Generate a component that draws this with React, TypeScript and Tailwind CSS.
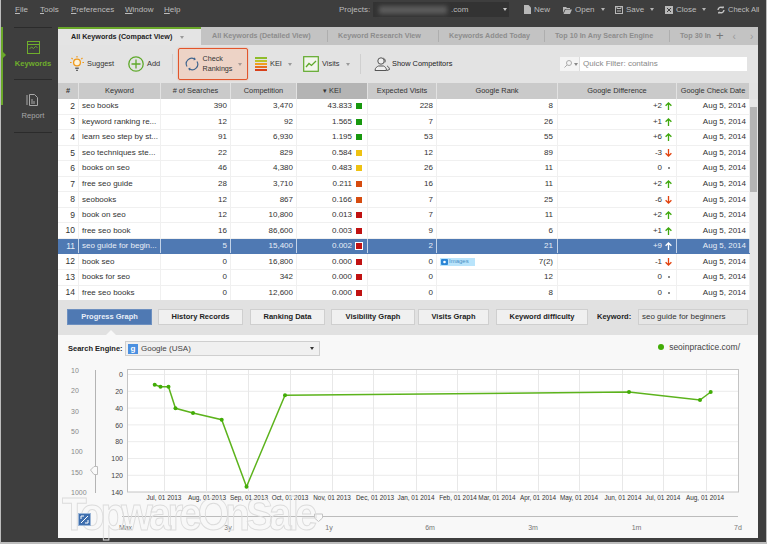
import React from 'react';

const GRID = 'grid grid-cols-[21px_82px_70px_66px_71px_69px_121px_119px_73px]';
const KEI = { g: 'bg-[#18980f]', y: 'bg-[#eec212]', o: 'bg-[#d64c10]', r: 'bg-[#c01212]' };

type Row = { n: number; kw: string; s: string; c: string; kei: string; k: keyof typeof KEI; v: string; rank: string; d: string; dir: 'up' | 'down' | 'none' };

const ROWS: Row[] = [
  { n: 2, kw: 'seo books', s: '390', c: '3,470', kei: '43.833', k: 'g', v: '228', rank: '8', d: '+2', dir: 'up' },
  { n: 3, kw: 'keyword ranking re...', s: '12', c: '92', kei: '1.565', k: 'g', v: '7', rank: '26', d: '+1', dir: 'up' },
  { n: 4, kw: 'learn seo step by st...', s: '91', c: '6,930', kei: '1.195', k: 'g', v: '53', rank: '55', d: '+6', dir: 'up' },
  { n: 5, kw: 'seo techniques ste...', s: '22', c: '829', kei: '0.584', k: 'y', v: '12', rank: '89', d: '-3', dir: 'down' },
  { n: 6, kw: 'books on seo', s: '46', c: '4,380', kei: '0.483', k: 'y', v: '26', rank: '11', d: '0', dir: 'none' },
  { n: 7, kw: 'free seo guide', s: '28', c: '3,710', kei: '0.211', k: 'o', v: '16', rank: '11', d: '+2', dir: 'up' },
  { n: 8, kw: 'seobooks', s: '12', c: '867', kei: '0.166', k: 'o', v: '7', rank: '25', d: '-6', dir: 'down' },
  { n: 9, kw: 'book on seo', s: '12', c: '10,800', kei: '0.013', k: 'r', v: '7', rank: '11', d: '+2', dir: 'up' },
  { n: 10, kw: 'free seo book', s: '16', c: '86,600', kei: '0.003', k: 'r', v: '9', rank: '6', d: '+1', dir: 'up' },
  { n: 11, kw: 'seo guide for begin...', s: '5', c: '15,400', kei: '0.002', k: 'r', v: '2', rank: '21', d: '+9', dir: 'up' },
  { n: 12, kw: 'book seo', s: '0', c: '16,800', kei: '0.000', k: 'r', v: '0', rank: '7(2)', d: '-1', dir: 'down' },
  { n: 13, kw: 'books for seo', s: '0', c: '342', kei: '0.000', k: 'r', v: '0', rank: '12', d: '0', dir: 'none' },
  { n: 14, kw: 'free seo books', s: '0', c: '12,600', kei: '0.000', k: 'r', v: '0', rank: '8', d: '0', dir: 'none' },
];

const POINTS: [number, number][] = [
  [154.7, 384.7], [160.5, 386.7], [168.5, 386.7], [175.5, 408.3], [193, 413], [221.7, 419.7],
  [246.5, 486.7], [285, 395.3], [629, 392], [700, 400], [710.7, 392],
];
const V_LINES = [164, 206, 248, 290, 332, 373, 416, 457, 496, 538, 579, 622, 663, 706];
const X_LABELS: [number, string][] = [
  [164, 'Jul, 01 2013'], [207, 'Aug, 01 2013'], [249, 'Sep, 01 2013'], [290, 'Oct, 01 2013'],
  [332, 'Nov, 01 2013'], [375, 'Dec, 01 2013'], [416, 'Jan, 01 2014'], [458, 'Feb, 01 2014'],
  [497, 'Mar, 01 2014'], [538, 'Apr, 01 2014'], [579, 'May, 01 2014'], [623, 'Jun, 01 2014'],
  [663, 'Jul, 01 2014'], [705, 'Aug, 01 2014'],
];

function Caret({ className = 'border-t-[#9a9a9a]' }: { className?: string }) {
  return <span className={`inline-block w-0 h-0 border-x-[2.5px] border-x-transparent border-t-[3px] ${className}`} />;
}

function MenuItem({ first, rest, className }: { first: string; rest: string; className: string }) {
  return <span className={`shrink-0 ${className}`}><span className="underline">{first}</span>{rest}</span>;
}

function TopAction({ icon, label, caret, className }: { icon: React.ReactNode; label: string; caret?: boolean; className: string }) {
  return (
    <div className={`flex items-center shrink-0 whitespace-nowrap ${className}`}>
      {icon}
      <span className="ml-[3px]">{label}</span>
      {caret && <span className="ml-[6px] flex"><Caret className="border-t-[#b5b5b5]" /></span>}
    </div>
  );
}

function DiffArrow({ dir, white }: { dir: Row['dir']; white: boolean }) {
  if (dir === 'none') return <span className="w-[7px] flex justify-center"><span className="w-[2px] h-[2px] rounded-full bg-[#666]" /></span>;
  const color = white ? '#ffffff' : dir === 'up' ? '#3fa80f' : '#e2430f';
  return (
    <svg width="7" height="8" viewBox="0 0 7 8" fill="none" stroke={color} strokeWidth="1.3">
      {dir === 'up' ? <path d="M3.5 8V1M.6 3.8 3.5 1l2.9 2.8" /> : <path d="M3.5 0v7M.6 4.2 3.5 7l2.9-2.8" />}
    </svg>
  );
}

function TabButton({ label, className, active }: { label: string; className: string; active?: boolean }) {
  return (
    <div className={`h-4 flex items-center justify-center border font-bold shrink-0 whitespace-nowrap text-[7.5px] ${active ? 'bg-[#4f79b3] border-[#6d90c0] text-[#e8eef7]' : 'bg-[#f0f0f0] border-[#cfcfcf] text-[#222]'} ${className}`}>
      {label}
    </div>
  );
}

function Chart() {
  return (
    <svg width="700" height="178" viewBox="58 360 700 178" className="block">
      <g fontSize="7" fill="#888">
        {([[370, '10'], [390, '20'], [411, '30'], [431, '50'], [451, '100'], [472, '150'], [492, '1000']] as [number, string][]).map(([y, t]) => (
          <text key={t} x="71" y={y + 2.5}>{t}</text>
        ))}
      </g>
      <line x1="95.5" y1="370" x2="95.5" y2="493" stroke="#b4b4b4" />
      <path d="M90.5 470 94 466.5h3.5v8H94z" fill="#fafafa" stroke="#bdbdbd" />

      <rect x="127.5" y="369.5" width="611" height="122.5" fill="#fff" stroke="#c4c4c4" />
      {[0, 1, 2, 3, 4, 5, 6].map((i) => (
        <line key={i} x1="128" x2="738" y1={374.5 + i * 16.8} y2={374.5 + i * 16.8} stroke="#ececec" />
      ))}
      {V_LINES.map((x) => <line key={x} x1={x + 0.5} x2={x + 0.5} y1="370" y2="492" stroke="#e8e8e8" />)}
      <g fontSize="7" fill="#444" textAnchor="end">
        {[0, 20, 40, 60, 80, 100, 120, 140].map((v, i) => (
          <text key={v} x="123" y={377 + i * 16.85}>{v}</text>
        ))}
      </g>
      <polyline points={POINTS.map((p) => p.join(',')).join(' ')} fill="none" stroke="#5cb31c" strokeWidth="1.5" />
      {POINTS.map(([x, y]) => <circle key={x} cx={x} cy={y} r="2" fill="#41ac06" />)}
      <g fontSize="6.4" fill="#333" textAnchor="middle">
        {X_LABELS.map(([x, t]) => <text key={x} x={x} y="499.5">{t}</text>)}
      </g>

      <line x1="122" y1="516.5" x2="738" y2="516.5" stroke="#bcbcbc" />
      <path d="M314.5 514h8v4l-4 3.5-4-3.5z" fill="#fafafa" stroke="#c4c4c4" />
      <g fontSize="7" fill="#777" textAnchor="middle">
        {([[125.5, 'Max'], [228, '3y'], [329, '1y'], [430, '6m'], [533, '3m'], [636.5, '1m'], [738, '7d']] as [number, string][]).map(([x, t]) => (
          <text key={t} x={x} y="530">{t}</text>
        ))}
      </g>
    </svg>
  );
}

export default function App() {
  return (
    <div className="relative w-[767px] h-[544px] bg-[#bdbdbd] overflow-hidden font-['Liberation_Sans',Arial,sans-serif] text-[8px] text-[#333]">
      <div className="w-[765px] h-[542px] ml-[1px] bg-[#3e3e3e] flex flex-col">
        {/* menu bar */}
        <div className="h-[27px] shrink-0 flex text-[#bcbcbc] pt-[4px]">
          <div className="h-[11px] flex items-center w-full pl-[14px]">
            <MenuItem first="F" rest="ile" className="w-[25px]" />
            <MenuItem first="T" rest="ools" className="w-[31px]" />
            <MenuItem first="P" rest="references" className="w-[54px]" />
            <MenuItem first="W" rest="indow" className="w-[39px]" />
            <MenuItem first="H" rest="elp" className="w-[175px]" />
            <span className="w-[34px] shrink-0">Projects:</span>
            <div className="w-[136px] h-[15px] bg-[#333] flex items-center shrink-0">
              <div className="ml-[6px] w-[68px] h-[8px] bg-[#5c5c5c] blur-[2px]" />
              <span className="ml-[4px]">.com</span>
              <span className="ml-[35px] flex"><Caret className="border-t-[#c8c8c8]" /></span>
            </div>
            <TopAction label="New" className="ml-[15px] w-[39px]" icon={
              <svg width="7" height="9" viewBox="0 0 7 9"><path d="M0 0h4.5L7 2.5V9H0z" fill="#b8b8b8" /></svg>
            } />
            <TopAction label="Open" caret className="w-[52px]" icon={
              <svg width="9" height="8" viewBox="0 0 9 8"><path d="M0 1h3l1 1h3v1H2L0 7zM2.5 3.5H9L7 8H.5z" fill="#b8b8b8" /></svg>
            } />
            <TopAction label="Save" caret className="w-[50px]" icon={
              <svg width="8" height="8" viewBox="0 0 8 8" fill="none" stroke="#b8b8b8"><rect x=".5" y=".5" width="7" height="7" /><path d="M2 .5v2h4v-2M2 5h4" /></svg>
            } />
            <TopAction label="Close" caret className="w-[52px]" icon={
              <svg width="8" height="8" viewBox="0 0 8 8"><rect width="8" height="8" fill="#b8b8b8" /><path d="m2 2 4 4M6 2 2 6" stroke="#3e3e3e" /></svg>
            } />
            <TopAction label="Check All" className="text-[7.5px]" icon={
              <svg width="8" height="8" viewBox="0 0 8 8" fill="none" stroke="#c4c4c4" strokeWidth="1.4"><path d="M1 4a3 3 0 0 1 5-2M7 4a3 3 0 0 1-5 2" /><path d="M5 .5h2v2zM3 7.500H1v-2z" fill="#c4c4c4" stroke="none" /></svg>
            } />
          </div>
        </div>

        <div className="flex-1 flex min-h-0">
          {/* sidebar */}
          <div className="w-[57px] shrink-0 relative pl-[13px] pr-[6px] flex flex-col text-[7.6px]">
            <div className="absolute left-0 top-0 w-[2px] h-[78px] bg-[#6aa82a]" />
            <div className="absolute left-[2px] top-[25px] w-0 h-0 border-y-[3px] border-y-transparent border-l-[3px] border-l-[#6aa82a]" />
            <div className="h-[53px] border-y border-[#2b2b2b] flex flex-col items-center pt-[13px] text-[#6fae2c] font-bold">
              <svg width="13" height="13" viewBox="0 0 13 13" fill="none" stroke="#6fae2c">
                <rect x=".5" y=".5" width="12" height="12" />
                <path d="M.5 3.500h12" />
                <path d="m2.500 8 2-2 2 1.500 2-2 2 1" strokeWidth=".9" />
              </svg>
              <span className="mt-[4px]">Keywords</span>
            </div>
            <div className="h-[53px] border-b border-[#2b2b2b] flex flex-col items-center pt-[13px] text-[#a8a8a8]">
              <svg width="14" height="13" viewBox="0 0 14 13" fill="none" stroke="#a8a8a8">
                <path d="M3.500 1.500v11h8v-8l-3-3zM1 2v10" />
                <path d="M5.500 6h1v5h-1zM7.500 8h1v3h-1z" fill="#a8a8a8" stroke="none" />
              </svg>
              <span className="mt-[4px]">Report</span>
            </div>
          </div>

          {/* main panel */}
          <div className="w-[700px] shrink-0 h-[511px] flex flex-col bg-[#e2e2e2]">
            {/* tabs */}
            <div className="h-[18px] shrink-0 flex bg-[#c3c3c3] font-bold text-[#8d8d8d] items-stretch text-[7.2px] whitespace-nowrap">
              <div className="w-[143px] border-t-2 border-[#6aa82a] bg-[#e4e4e4] text-[#222] flex items-center pl-[13px] shrink-0">
                All Keywords (Compact View)
                <span className="ml-[8px] flex"><Caret /></span>
              </div>
              <div className="w-[127px] shrink-0 flex items-center pl-[11px] border-r border-[#aeaeae] my-[3px]">All Keywords (Detailed View)</div>
              <div className="w-[111px] shrink-0 flex items-center pl-[10px] border-r border-[#aeaeae] my-[3px]">Keyword Research View</div>
              <div className="w-[106px] shrink-0 flex items-center pl-[10px] border-r border-[#aeaeae] my-[3px]">Keywords Added Today</div>
              <div className="w-[125px] shrink-0 flex items-center pl-[10px] border-r border-[#aeaeae] my-[3px]">Top 10 In Any Search Engine</div>
              <div className="w-[42px] shrink-0 overflow-hidden flex items-center pl-[10px]">Top 30 In</div>
              <span className="ml-[4px] flex items-center text-[13px] font-normal text-[#777]">+</span>
              <span className="ml-[9px] flex items-center text-[10px] font-normal text-[#999]">‹</span>
              <span className="ml-[14px] flex items-center text-[10px] font-normal text-[#999]">›</span>
            </div>

            {/* toolbar */}
            <div className="h-[38px] shrink-0 flex items-center text-[#333] bg-[#e3e3e3] pl-[12px] text-[7.4px] whitespace-nowrap">
              <div className="w-[58px] shrink-0 flex items-center">
                <svg className="shrink-0" width="14" height="16" viewBox="0 0 14 16" fill="none">
                  <circle cx="7" cy="6.5" r="3.4" stroke="#f09a1c" strokeWidth="1.3" fill="#fdf3dc" />
                  <path d="M7 0v1.500M1.500 2 2.700 3.200M12.500 2l-1.200 1.200M0 6.500h1.600M12.400 6.500H14" stroke="#f09a1c" strokeWidth="1.2" />
                  <path d="M5.200 11.500h3.600v1.400H5.200zM6 13.800h2V15H6z" fill="#666" />
                </svg>
                <span className="ml-[3px]">Suggest</span>
              </div>
              <div className="w-[44px] shrink-0 flex items-center">
                <svg className="shrink-0" width="16" height="16" viewBox="0 0 16 16" fill="none" stroke="#5fa92b" strokeWidth="1.3">
                  <circle cx="8" cy="8" r="7.2" />
                  <path d="M8 3.500v9M3.500 8h9" />
                </svg>
                <span className="ml-[3px]">Add</span>
              </div>
              <div className="w-px h-[20px] bg-[#d0d0d0] shrink-0" />
              <div className="ml-[5px] w-[70px] h-[32px] shrink-0 rounded-[2px] border-[1.5px] border-[#e2552b] bg-[#edd3c6] flex items-center shadow-[0_0_2px_#e8a58c]">
                <svg className="ml-[6px] shrink-0" width="14" height="14" viewBox="0 0 14 14" fill="none" stroke="#41668f" strokeWidth="1.2">
                  <path d="M2 9.500A5.500 5.500 0 0 1 9.500 2" />
                  <path d="M12 4.500A5.500 5.500 0 0 1 4.500 12" />
                  <path d="M9 .3 11 2.300 8.700 3.600zM5 13.700 3 11.700l2.300-1.300z" fill="#41668f" stroke="none" />
                </svg>
                <span className="ml-[3.5px] leading-[10px] text-[#333] text-[7.2px]">Check<br />Rankings</span>
                <span className="ml-[6px] flex"><Caret className="border-t-[#a89a94]" /></span>
              </div>
              <div className="ml-[7px] w-[48px] shrink-0 flex items-center">
                <div className="w-[12px] flex flex-col gap-[1.5px] shrink-0">
                  <span className="h-[1.5px] bg-[#8fbc2a]" />
                  <span className="h-[1.5px] bg-[#bcc42a]" />
                  <span className="h-[1.5px] bg-[#f0a020]" />
                  <span className="h-[1.5px] bg-[#e8701c]" />
                  <span className="h-[1.5px] bg-[#d8401a]" />
                </div>
                <span className="ml-[3px]">KEI</span>
                <span className="ml-[6px] flex"><Caret /></span>
              </div>
              <div className="w-[57px] shrink-0 flex items-center">
                <svg className="shrink-0" width="16" height="16" viewBox="0 0 16 16" fill="none">
                  <rect x=".7" y=".7" width="14.6" height="14.6" stroke="#5fa92b" strokeWidth="1.2" fill="#f2f5ec" />
                  <path d="m3 11 3-3.500 2.500 2L13 5" stroke="#5fa92b" strokeWidth="1.3" />
                </svg>
                <span className="ml-[3px]">Visits</span>
                <span className="ml-[6px] flex"><Caret /></span>
              </div>
              <div className="w-px h-[20px] bg-[#d0d0d0] shrink-0" />
              <div className="ml-[13px] w-[186px] shrink-0 flex items-center">
                <svg className="shrink-0" width="16" height="17" viewBox="0 0 16 17" fill="none" stroke="#555" strokeWidth="1">
                  <circle cx="7" cy="5" r="3.2" fill="#eee" />
                  <path d="M9.500 2.200a3 3 0 0 1 1.300 4.300" />
                  <path d="M1 14.500c0-3 2.500-4 3.500-4.500h5c1 .5 3 1.500 3 4.500z" fill="#eee" />
                  <path d="M13 10c1 .5 2.500 1.500 2.500 3.500l-2.500 1" />
                </svg>
                <span className="ml-[2px] text-[#222]">Show Competitors</span>
              </div>
              <div className="w-[187px] h-[14px] flex bg-white shrink-0">
                <div className="w-[20px] flex items-center pl-[4px] gap-[2px] border-r border-[#dcdcdc] bg-[#f4f4f4]">
                  <svg width="8" height="8" viewBox="0 0 8 8" fill="none" stroke="#aaa"><circle cx="5" cy="3" r="2.500" /><path d="M3 5 .5 7.500" /></svg>
                  <Caret className="border-t-[#888]" />
                </div>
                <span className="ml-[3px] flex items-center text-[#888] text-[8px]">Quick Filter: contains</span>
              </div>
            </div>

            {/* keyword table */}
            <div className="shrink-0 relative bg-white">
              <div className={`${GRID} h-[16px] pr-[8px] w-[700px] text-[#333] bg-[#e2e2e2] text-[7.4px]`}>
                {['#', 'Keyword', '# of Searches', 'Competition', '▾ KEI', 'Expected Visits', 'Google Rank', 'Google Difference', 'Google Check Date'].map((h) => (
                  <div key={h} className={`flex items-center justify-center border-r border-[#e2e2e2] whitespace-nowrap overflow-hidden ${h === '▾ KEI' ? 'bg-[#b4b4b4]' : 'bg-[#cacaca]'} ${h === '#' ? 'font-bold' : ''}`}>{h}</div>
                ))}
              </div>
              <div className="pr-[8px]">
                {ROWS.map((r) => {
                  const sel = r.n === 11;
                  const cell = `flex items-center justify-end border-r ${sel ? 'border-[#c3d3e8]' : 'border-[#f0f0f0]'}`;
                  return (
                    <div key={r.n} className={`${GRID} h-[15.55px] border-b ${sel ? 'bg-[#4f79b3] text-[#e8eef7] border-[#4f79b3]' : 'text-[#333] border-[#f0f0f0]'}`}>
                      <div className={`${cell} pr-[3px] text-[8.5px]`}>{r.n}</div>
                      <div className={`${cell} !justify-start pl-[3px] whitespace-nowrap overflow-hidden`}>{r.kw}</div>
                      <div className={`${cell} pr-[3px]`}>{r.s}</div>
                      <div className={`${cell} pr-[3px]`}>{r.c}</div>
                      <div className={`${cell} pr-[5px]`}>
                        {r.kei}
                        <span className={`ml-[4px] w-[6px] h-[6px] ${KEI[r.k]} ${sel ? 'outline outline-1 outline-white' : ''}`} />
                      </div>
                      <div className={`${cell} pr-[3px]`}>{r.v}</div>
                      <div className={`${cell} pr-[4px] !justify-between pl-[3px]`}>
                        {r.n === 12 ? (
                          <span className="w-[35px] h-[8px] bg-[#b9e4fb] flex items-center text-[6px] text-[#4a8fc4]">
                            <svg className="mx-[1px]" width="7" height="7" viewBox="0 0 7 7"><rect y="1" width="7" height="6" rx="1" fill="#2b86d6" /><circle cx="3.500" cy="4" r="1.300" fill="#fff" /></svg>
                            Images
                          </span>
                        ) : <span />}
                        <span>{r.rank}</span>
                      </div>
                      <div className={`${cell} pr-[4px] gap-[3px]`}>
                        <span>{r.d}</span>
                        <DiffArrow dir={r.dir} white={sel} />
                      </div>
                      <div className={`${cell} pr-[3px] whitespace-nowrap`}>Aug 5, 2014</div>
                    </div>
                  );
                })}
              </div>
              <div className="absolute right-0 top-[16px] bottom-0 w-[8px] bg-[#e6e6e6]">
                <div className="mt-[8px] h-[85px] w-[7px] bg-[#b4b4b4]" />
              </div>
            </div>

            {/* graph tabs */}
            <div className="h-[35px] shrink-0 mt-[-1px] bg-[#e1e1e1] flex items-start pt-[9px] pl-[9px] text-[#222] relative">
              <TabButton label="Progress Graph" active className="w-[85px]" />
              <TabButton label="History Records" className="ml-[6px] w-[85px]" />
              <TabButton label="Ranking Data" className="ml-[7px] w-[75px]" />
              <TabButton label="Visibility Graph" className="ml-[6px] w-[84px]" />
              <TabButton label="Visits Graph" className="ml-[3px] w-[71px]" />
              <TabButton label="Keyword difficulty" className="ml-[7px] w-[92px]" />
              <span className="ml-[9px] w-[41px] shrink-0 h-4 flex items-center font-bold text-[7.5px]">Keyword:</span>
              <div className="w-[110px] h-[16px] border border-[#cfcfcf] bg-[#e6e6e6] flex items-center pl-[3px] text-[#333] whitespace-nowrap">seo guide for beginners</div>
              <div className="absolute left-[48px] bottom-0 w-0 h-0 border-x-[5px] border-x-transparent border-b-[5px] border-b-[#f8f8f8]" />
            </div>

            {/* graph panel */}
            <div className="flex-1 bg-[#f8f8f8] overflow-hidden">
              <div className="h-[25px] pt-[6px] pl-[10px] flex items-start">
                <span className="w-[57px] shrink-0 h-[15px] flex items-center font-bold text-[#222] text-[7.5px] whitespace-nowrap">Search Engine:</span>
                <div className="w-[195px] h-[15px] border border-[#cfcfcf] bg-[#f0f0f0] flex items-center">
                  <span className="ml-[2px] w-[10px] h-[10px] bg-[#4a8fe0] text-white text-[8px] font-bold flex items-center justify-center">g</span>
                  <span className="ml-[3px] text-[#444]">Google (USA)</span>
                  <span className="ml-auto mr-[5px] flex"><Caret className="border-t-[#333]" /></span>
                </div>
                <div className="ml-auto mr-[18px] h-[12px] flex items-center text-[#444] text-[8.5px]">
                  <span className="w-[6px] h-[6px] rounded-full bg-[#41ac06] mr-[5px]" />
                  seoinpractice.com/
                </div>
              </div>
              <Chart />
            </div>
          </div>
        </div>
      </div>

      {/* watermark */}
      <div className="absolute left-[62px] top-[488px] origin-left scale-x-[0.88] text-[46px] leading-[52px] font-bold tracking-[-4.5px] text-transparent [-webkit-text-stroke:1px_#dcdcdc] whitespace-nowrap pointer-events-none">
        TopwareOnSale
      </div>

      {/* zoom reset button sits above the watermark */}
      <div className="absolute left-[78px] top-[513px] w-[13px] h-[13px] bg-[#3f6fae] border border-[#9db7d8] flex items-center justify-center">
        <svg width="9" height="9" viewBox="0 0 9 9" fill="none" stroke="#fff">
          <path d="M1 8 8 1M1 1h3M1 1v3M8 5v3H5" />
        </svg>
      </div>
    </div>
  );
}
